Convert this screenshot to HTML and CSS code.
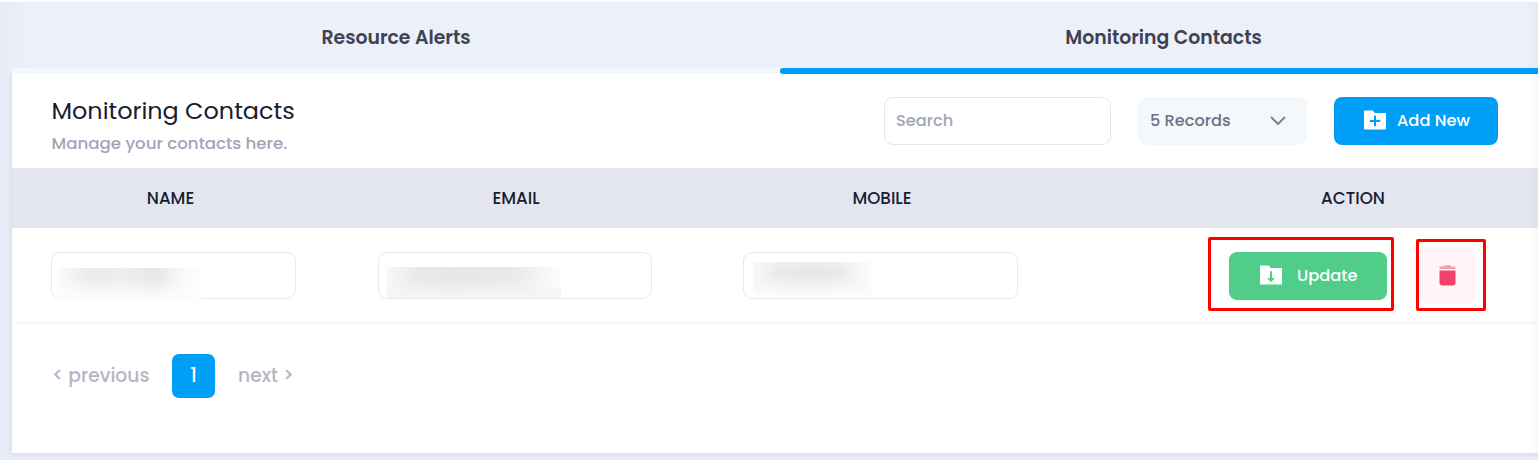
FILE: index.html
```html
<!DOCTYPE html>
<html lang="en">
<head>
<meta charset="utf-8">
<title>Monitoring Contacts</title>
<link rel="stylesheet" href="styles.css">
</head>
<body>
<nav class="tabs">
  <a class="tab"><span>Resource Alerts</span></a>
  <a class="tab active"><span>Monitoring Contacts</span></a>
</nav>
<main class="card">
  <header class="card-header">
    <div class="heading">
      <h1>Monitoring Contacts</h1>
      <p>Manage your contacts here.</p>
    </div>
    <div class="search"><span>Search</span></div>
    <div class="select"><span>5 Records</span>
      <svg width="16" height="10" viewBox="0 0 16 10"><path d="M1.500 1.500 8 8l6.500-6.500" fill="none" stroke="#7e8299" stroke-width="2" stroke-linecap="round" stroke-linejoin="round"/></svg>
    </div>
    <div class="btn add">
      <svg width="22" height="20" viewBox="0 0 22 20"><path d="M0 1.500Q0 .5 1 .5H8.500L11 3H22V18.500Q22 19.500 21 19.500H1Q0 19.500 0 18.500Z" fill="#fff"/><path d="M11 6.500v9M6.500 11h9" stroke="#009ef7" stroke-width="2" stroke-linecap="round"/></svg>
      <span>Add New</span>
    </div>
  </header>
  <div class="row thead">
    <div>NAME</div><div>EMAIL</div><div class="mobile">MOBILE</div><div class="action">ACTION</div>
  </div>
  <div class="row body">
    <div class="cell c1"><div class="input"><i class="mask m1"></i></div></div>
    <div class="cell c2"><div class="input"><i class="mask m2"></i></div></div>
    <div class="cell c3"><div class="input"><i class="mask m3"></i></div></div>
    <div class="actions">
      <div class="mark mark-update"><div class="btn update">
        <svg width="22" height="20" viewBox="0 0 22 20"><path d="M0 1.500Q0 .5 1 .5H8.500L11 3H22V18.500Q22 19.500 21 19.500H1Q0 19.500 0 18.500Z" fill="#fff"/><path d="M11 7v7" stroke="#50cd89" stroke-width="2" stroke-linecap="round"/><path d="M7 13h8L11.700 16.600Q11 17.200 10.300 16.600Z" fill="#50cd89"/></svg>
        <span>Update</span></div></div>
      <div class="mark mark-delete"><div class="delete">
        <svg width="17" height="21" viewBox="0 0 17 21"><path d="M.5 5.500h16V17.500Q16.500 20.500 13.500 20.500h-10Q.5 20.500 .5 17.500Z" fill="#f1416c"/><path d="M1.500 1.500H5Q5.500 .2 6.500 .2h4Q11.500 .2 12 1.500h3.500Q16.500 1.500 16.500 2.700T15.500 4h-14Q.5 4 .5 2.700T1.500 1.500Z" fill="#f1416c" opacity=".5"/></svg>
      </div></div>
    </div>
  </div>
  <footer class="pager">
    <span class="prev">&lt; previous</span><span class="page">1</span><span class="next">next &gt;</span>
  </footer>
</main>
<div class="edge-shade"></div>
</body>
</html>
```
FILE: styles.css
```css
* { box-sizing: border-box; }
body {
  margin: 0; width: 1538px; height: 460px; overflow: hidden;
  border-top: 2px solid #fcfdfe;
  background: linear-gradient(90deg, #e8ecf6 0, #ebf0f9 34px);
  font-family: Poppins, Inter, sans-serif; font-weight: 500;
}
svg { display: block; flex: none; }
span { white-space: nowrap; }
.tabs { display: flex; height: 72px; margin-left: 12px; }
.tab {
  flex: none; width: 768px; height: 71px; padding-top: 5px;
  display: flex; align-items: center; justify-content: center;
  border-bottom: 5px solid #f5f8fa; color: #3f4254; font-size: 18.85px; font-weight: 600;
}
.tab.active { width: 770px; height: 72px; position: relative; border-bottom: 0; padding: 0 3px 1px 0; }
.tab.active::after {
  content: ""; position: absolute; left: 0; right: -6px; bottom: 0; height: 6px;
  border-radius: 3px; background: #009ef7;
}
.card { position: relative; z-index: -1; margin: -1px 0 0 12px; height: 380px; background: #fff; box-shadow: 0 1px 6px rgba(60,75,130,.14); }
.card-header { display: flex; height: 95px; padding: 24px 40px 0 39.5px; align-items: flex-start; }
.heading { flex: 1; }
h1 { margin: 0; font-size: 23.9px; line-height: 28px; font-weight: 400; color: #181c32; }
p { margin: 6px 0 0; font-size: 16.65px; line-height: 25px; color: #a1a5b7; }
.search, .select { height: 48px; border-radius: 9px; font-size: 16.2px; display: flex; align-items: center; padding: 0 12px 2px; }
.search { width: 227px; border: 1px solid #e4e6ef; color: #a1a5b7; padding: 0 11px 2px; }
.select { width: 169px; margin: 0 27px 0 27px; background: #f5f8fa; color: #6d7087; justify-content: space-between; padding-right: 21px; }
.select svg { margin-top: 1px; }
.btn { display: flex; align-items: center; border-radius: 8px; height: 48px; color: #fff; font-size: 16.3px; padding-bottom: 2px; }
.add { width: 164px; background: #009ef7; padding-left: 30px; gap: 11px; }
.row { display: grid; grid-template-columns: 317px 374px 355px 480px; }
.thead { height: 60px; background: #e4e6ef; color: #181c32; font-size: 16.8px; }
.thead > div { display: flex; align-items: center; justify-content: center; padding-bottom: 1px; }
.thead .mobile { padding-left: 3px; }
.thead .action { padding-left: 110px; }
.body { height: 96px; border-bottom: 2px solid #f7f7f9; }
.cell { padding: 24px 0 0 39px; }
.c2 { padding-left: 49px; }
.c3 { padding-left: 40px; }
.input { width: 245px; height: 47px; border: 1px solid #e6e7f0; border-radius: 9px; position: relative; }
.c2 .input { width: 274px; }
.c3 .input { width: 275px; }
.mask { position: absolute; }
.m1 { left: 5px; top: 15px; width: 145px; height: 33px; background: linear-gradient(rgba(254,254,254,0) 25%, #fdfdfd 95%), linear-gradient(90deg, #fafafa, #e9e9eb 25%, #eeeef0 45%, #e6e6e8 68%, #fafafa 88%, #fefefe); }
.m2 { left: 8px; top: 14px; width: 174px; height: 31px; background: linear-gradient(rgba(246,246,248,0) 35%, #f5f5f8 95%), linear-gradient(90deg, #f7f7f8, #e9e9eb 18%, #e6e6e8 38%, #eaeaec 75%, #f8f8f9 92%, #fdfdfd); }
.m3 { left: 9px; top: 9px; width: 118px; height: 33px; background: linear-gradient(rgba(251,251,252,.35), rgba(251,251,252,0) 35%, #fafafb 95%), linear-gradient(90deg, #f8f8f8, #e9e9eb 22%, #e5e5e7 50%, #eaeaec 75%, #fbfbfb 96%); }
.actions { display: flex; padding: 9px 0 0 150px; gap: 21px; }
.mark { border: 3px solid #f00; border-radius: 2px; }
.mark-update { width: 186px; height: 74px; padding: 12px 0 0 18px; }
.update { width: 158px; background: #50cd89; padding-left: 31px; gap: 15px; }
.mark-delete { width: 70px; height: 72px; margin: 2px 0 0 1px; padding: 5px 0 0 0; }
.delete { width: 57px; height: 57px; border-radius: 8px; background: #fff5f8; display: flex; align-items: center; justify-content: center; }
.pager { display: flex; align-items: center; height: 44px; margin-top: 30px; padding-left: 40px; color: #b5b5c3; font-size: 18.7px; }
.prev { width: 120px; padding-bottom: 2px; }
.next { padding-bottom: 2px; }
.page { width: 43px; height: 44px; border-radius: 7px; background: #009ef7; color: #fff; display: flex; align-items: center; justify-content: center; margin-right: 23px; padding-bottom: 2px; }
.edge-shade { position: absolute; right: 0; top: 2px; width: 12px; height: 458px; background: linear-gradient(90deg, transparent, rgba(0,0,40,.025)); }
```
